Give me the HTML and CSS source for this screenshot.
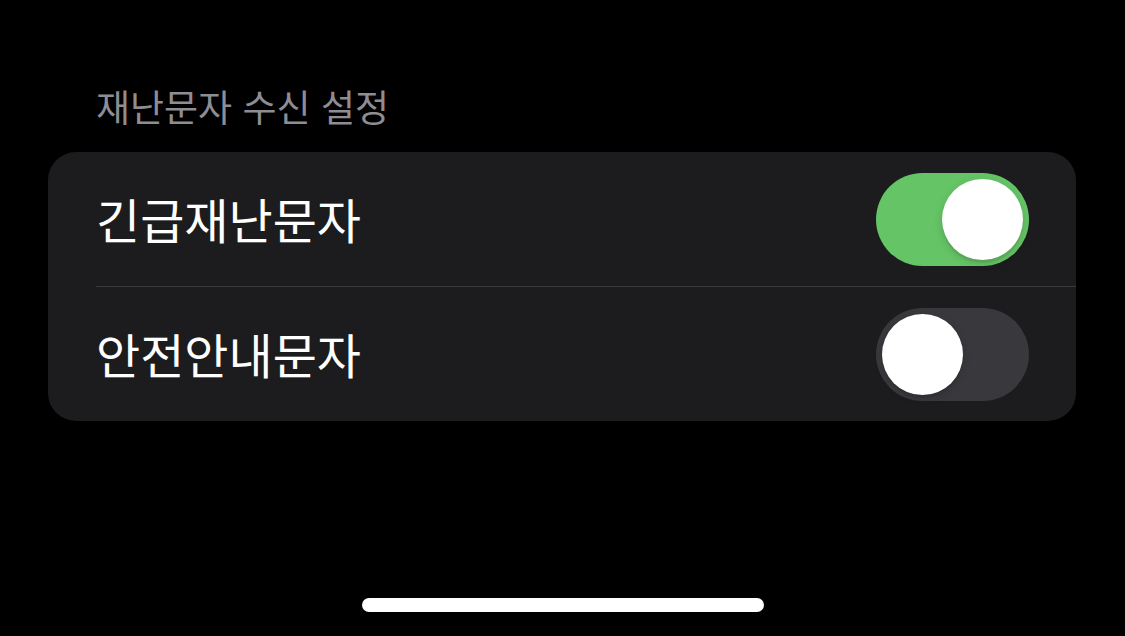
FILE: index.html
```html
<!DOCTYPE html>
<html lang="ko">
<head>
  <meta charset="UTF-8">
  <meta name="viewport" content="width=device-width, initial-scale=1.0">
  <title>재난문자 수신 설정</title>
  <link rel="stylesheet" href="styles.css">
</head>
<body>
  <div class="screen">
    <div class="section">
      <h2 class="section-title">재난문자 수신 설정</h2>
      <div class="card">
        <div class="row">
          <span class="label">긴급재난문자</span>
          <div class="toggle on"><div class="knob"></div></div>
        </div>
        <div class="row">
          <span class="label">안전안내문자</span>
          <div class="toggle"><div class="knob"></div></div>
        </div>
      </div>
    </div>
    <div class="home-bar"></div>
  </div>
</body>
</html>
```

FILE: styles.css
```css
body {
  margin: 0;
  background-color: #000;
  font-family: "Noto Sans CJK KR", "Noto Sans", sans-serif;
}

.screen {
  width: 1125px;
  height: 636px;
  display: flex;
  flex-direction: column;
  box-sizing: border-box;
  padding: 80px 49px 24px 48px;
}

.section {
  flex: 1;
}

.section-title {
  margin: 0 0 20px 48px;
  font-size: 37px;
  font-weight: 400;
  line-height: 52px;
  color: #8d8d93;
}

.card {
  background-color: #1c1c1e;
  border-radius: 28px;
  overflow: hidden;
}

.row {
  display: flex;
  align-items: center;
  justify-content: space-between;
  height: 134px;
  margin-left: 48px;
  padding-right: 47px;
  box-sizing: border-box;
}

.row + .row {
  border-top: 1px solid #3a3a3c;
  height: 135px;
}

.label {
  font-size: 48px;
  color: #fff;
  line-height: 60px;
  margin-top: -2px;
}

.toggle {
  width: 153px;
  height: 93px;
  border-radius: 47px;
  background-color: #39393d;
  box-sizing: border-box;
  padding: 6px;
  display: flex;
  justify-content: flex-start;
}

.toggle.on {
  background-color: #65c466;
  justify-content: flex-end;
}

.knob {
  width: 81px;
  height: 81px;
  border-radius: 50%;
  background-color: #fff;
  box-shadow: 0 3px 8px rgba(0, 0, 0, 0.15), 0 3px 1px rgba(0, 0, 0, 0.06);
}

.home-bar {
  align-self: center;
  width: 402px;
  height: 14px;
  border-radius: 7px;
  background-color: #fff;
  margin-left: 1px;
}
```
